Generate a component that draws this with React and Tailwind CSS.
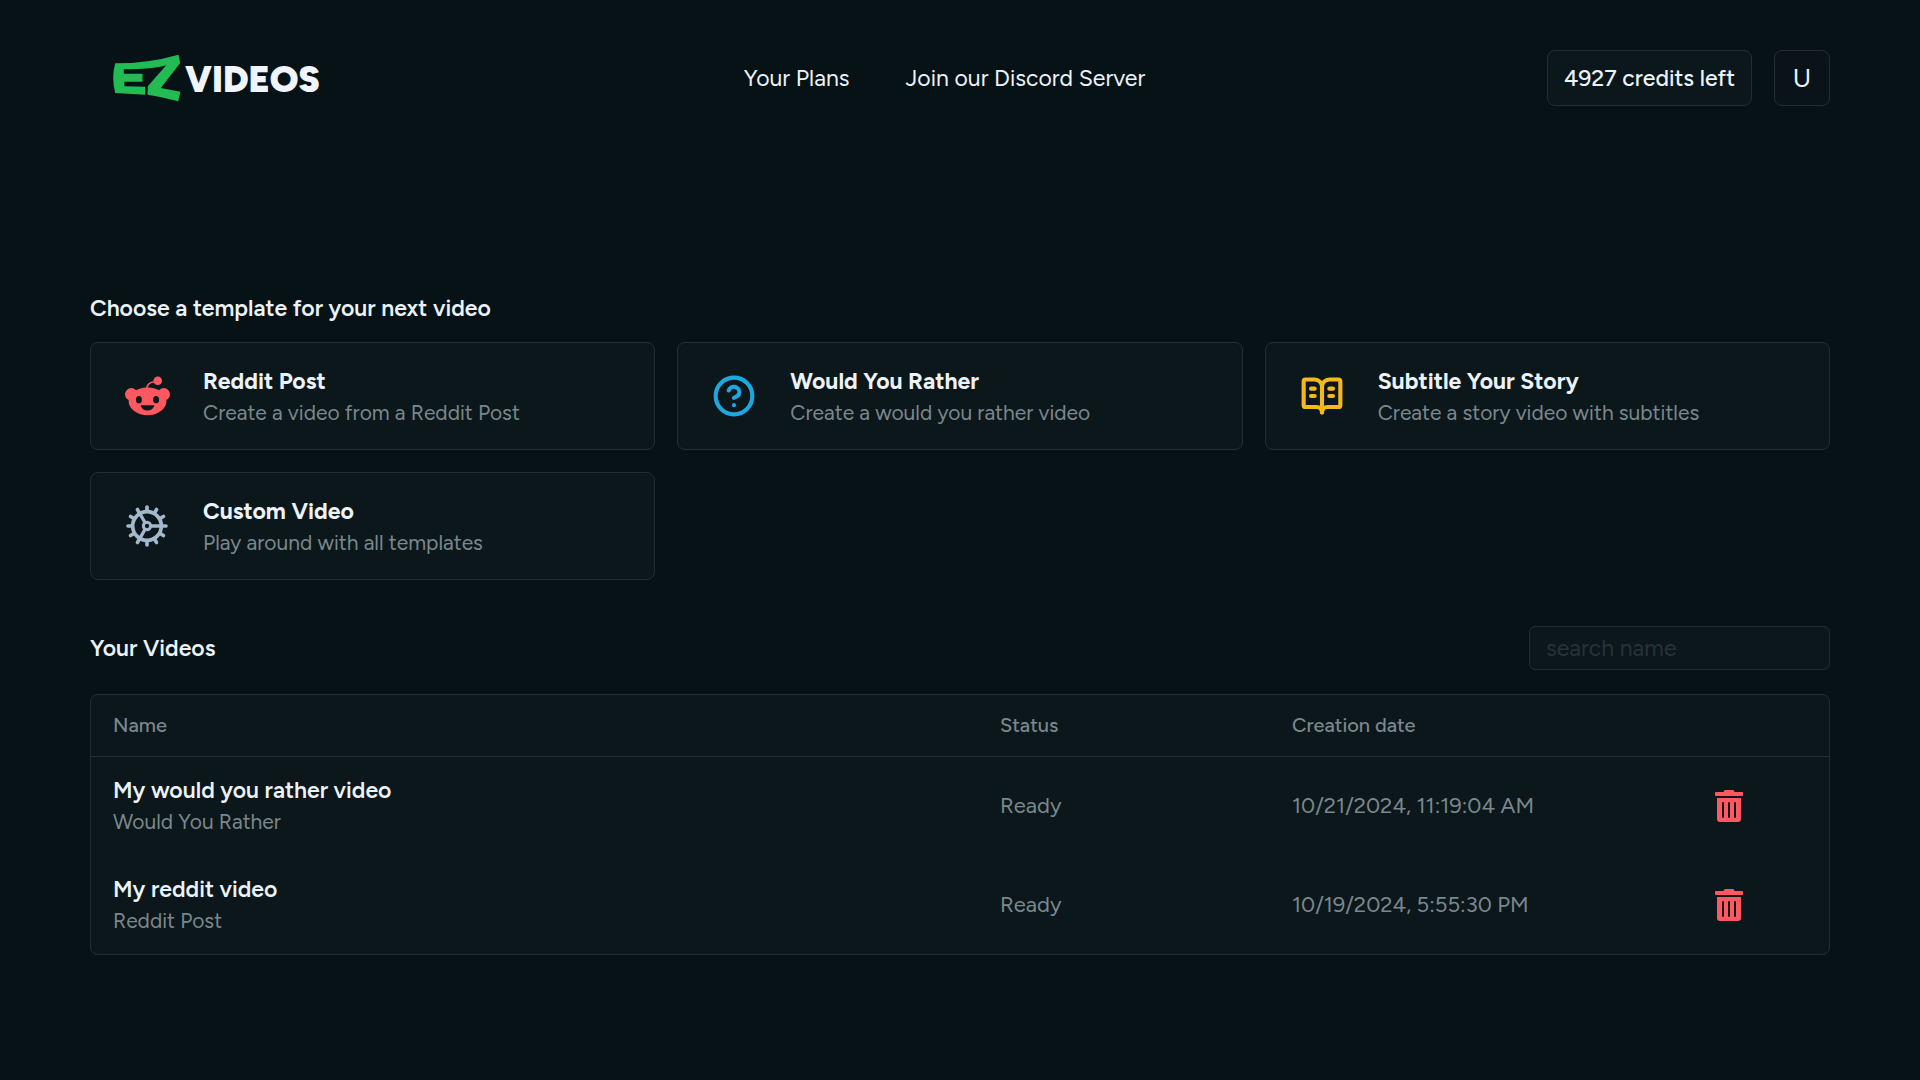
import { useState } from "react";
import { BookOpenText, CircleHelp } from "lucide-react";
import { FaTrashAlt } from "react-icons/fa";

function RedditIcon() {
  return (
    <svg viewBox="42 33 136 118" className="h-10 w-[45px] text-[#ff5861]" fill="currentColor" aria-hidden="true">
      <path d="M108 70Q109 51 132 49" fill="none" stroke="currentColor" strokeWidth="5" />
      <circle cx="141" cy="46" r="13" />
      <circle cx="61" cy="87" r="19" />
      <circle cx="159" cy="87" r="19" />
      <ellipse cx="110" cy="108" rx="57" ry="42" />
      <g fill="#0c171b">
        <ellipse cx="84" cy="103" rx="9" ry="11" />
        <ellipse cx="136" cy="103" rx="9" ry="11" />
        <path d="M91 120H129Q131 120 130 123Q124 136 110 136Q96 136 90 123Q89 120 91 120Z" />
      </g>
    </svg>
  );
}

const teeth = [0, 30, 60, 90, 120, 150, 180, 210, 240, 270, 300, 330];

function CogIcon() {
  return (
    <svg
      viewBox="-63 -63 126 126"
      className="size-[42px] text-[#a3b8cc]"
      fill="none"
      stroke="currentColor"
      strokeLinecap="round"
      aria-hidden="true"
    >
      <circle r="43" strokeWidth="11" />
      <circle r="11" strokeWidth="9" />
      {teeth.map((angle) => (
        <path key={angle} d="M46 0H57" strokeWidth="11" transform={`rotate(${angle})`} />
      ))}
      {[0, 120, 240].map((angle) => (
        <path key={angle} d="M14 0H42" strokeWidth="10" transform={`rotate(${angle})`} />
      ))}
    </svg>
  );
}

const templates = [
  {
    title: "Reddit Post",
    description: "Create a video from a Reddit Post",
    icon: <RedditIcon />,
  },
  {
    title: "Would You Rather",
    description: "Create a would you rather video",
    icon: <CircleHelp strokeWidth={2.25} className="size-11 text-[#1ba8e0]" />,
  },
  {
    title: "Subtitle Your Story",
    description: "Create a story video with subtitles",
    icon: <BookOpenText strokeWidth={2.25} className="size-11 text-[#f5b91a]" />,
  },
  {
    title: "Custom Video",
    description: "Play around with all templates",
    icon: <CogIcon />,
  },
];

const videos = [
  { id: 1, name: "My would you rather video", template: "Would You Rather", status: "Ready", date: "10/21/2024, 11:19:04 AM" },
  { id: 2, name: "My reddit video", template: "Reddit Post", status: "Ready", date: "10/19/2024, 5:55:30 PM" },
];

function Logo() {
  return (
    <a href="#" className="flex items-center gap-1 px-[22px]">
      <svg viewBox="0 0 206 144" className="h-12 w-[69px]" fill="#22bb54" aria-hidden="true">
        <path d="M9 28Q110 28 199 2L204 27L146 102L205 113L198 142Q150 128 106 122L107 97L162 34Q120 46 35 46L35 59L91 59L91 83L36 83L37 97L99 98L99 122L9 117Q-3 70 9 28Z" />
      </svg>
      <span className="pt-1 text-4xl leading-10 font-black text-[#f0f5fb]">VIDEOS</span>
    </a>
  );
}

function Navbar() {
  return (
    <header className="flex items-center justify-between">
      <Logo />
      <nav className="flex gap-14 text-[23px] leading-8">
        <a href="#">Your Plans</a>
        <a href="#">Join our Discord Server</a>
      </nav>
      <div className="flex gap-[22px]">
        <button className="h-14 rounded-lg border border-[#222e32] bg-[#0c171b] px-4 text-[23px] font-medium">
          4927 credits left
        </button>
        <button className="size-14 rounded-lg border border-[#222e32] bg-[#0a1418] text-[26px]">U</button>
      </div>
    </header>
  );
}

function TemplateCard({ title, description, icon }) {
  return (
    <button className="flex h-[108px] items-center gap-8 rounded-lg border border-[#222e32] bg-[#0c171b] px-8 text-left">
      <span className="flex w-12 shrink-0 justify-center">{icon}</span>
      <span className="flex flex-col pt-0.5">
        <span className="text-[23px] leading-8 font-bold">{title}</span>
        <span className="text-[21px] leading-8 text-[#7a888d]">{description}</span>
      </span>
    </button>
  );
}

export default function App() {
  const [search, setSearch] = useState("");
  const visibleVideos = videos.filter((video) => video.name.toLowerCase().includes(search.toLowerCase()));

  return (
    <div className="min-h-screen bg-[#071216] px-[90px] py-[50px] font-['Figtree','Inter',sans-serif] text-[#ecf3f8]">
      <Navbar />

      <main className="mt-[184px]">
        <h2 className="text-[23px] leading-9 font-semibold">Choose a template for your next video</h2>
        <section className="mt-4 grid grid-cols-3 gap-[22px]">
          {templates.map((template) => (
            <TemplateCard key={template.title} {...template} />
          ))}
        </section>

        <div className="mt-[46px] flex items-center justify-between">
          <h2 className="text-[23px] leading-9 font-semibold">Your Videos</h2>
          <input
            type="text"
            aria-label="search name"
            placeholder="search name"
            value={search}
            onChange={(event) => setSearch(event.target.value)}
            className="h-11 w-[301px] rounded-md border border-[#222e32] bg-[#0c171b] px-4 text-[23px] placeholder:text-[#263238]"
          />
        </div>

        <div className="mt-6 overflow-hidden rounded-lg border border-[#222e32] bg-[#0c171b]">
          <table className="w-full table-fixed text-left">
            <thead>
              <tr className="h-[61px] border-b border-[#222e32] text-[20px] text-[#7a888d]">
                <th className="px-[22px] font-medium">Name</th>
                <th className="w-[292px] px-[22px] font-medium">Status</th>
                <th className="w-[445px] px-[22px] font-medium">Creation date</th>
                <th className="w-[114px]" aria-label="Actions" />
              </tr>
            </thead>
            <tbody>
              {visibleVideos.map((video) => (
                <tr key={video.id} className="h-[99px] text-[22px] text-[#7a888d]">
                  <td className="px-[22px]">
                    <p className="text-[23px] leading-8 font-semibold text-[#ecf3f8]">{video.name}</p>
                    <p className="text-[21px] leading-8">{video.template}</p>
                  </td>
                  <td className="px-[22px]">{video.status}</td>
                  <td className="px-[22px]">{video.date}</td>
                  <td>
                    <button aria-label={`Delete ${video.name}`} className="block text-[#ff5861]">
                      <FaTrashAlt className="h-8 w-7" />
                    </button>
                  </td>
                </tr>
              ))}
            </tbody>
          </table>
        </div>
      </main>
    </div>
  );
}
